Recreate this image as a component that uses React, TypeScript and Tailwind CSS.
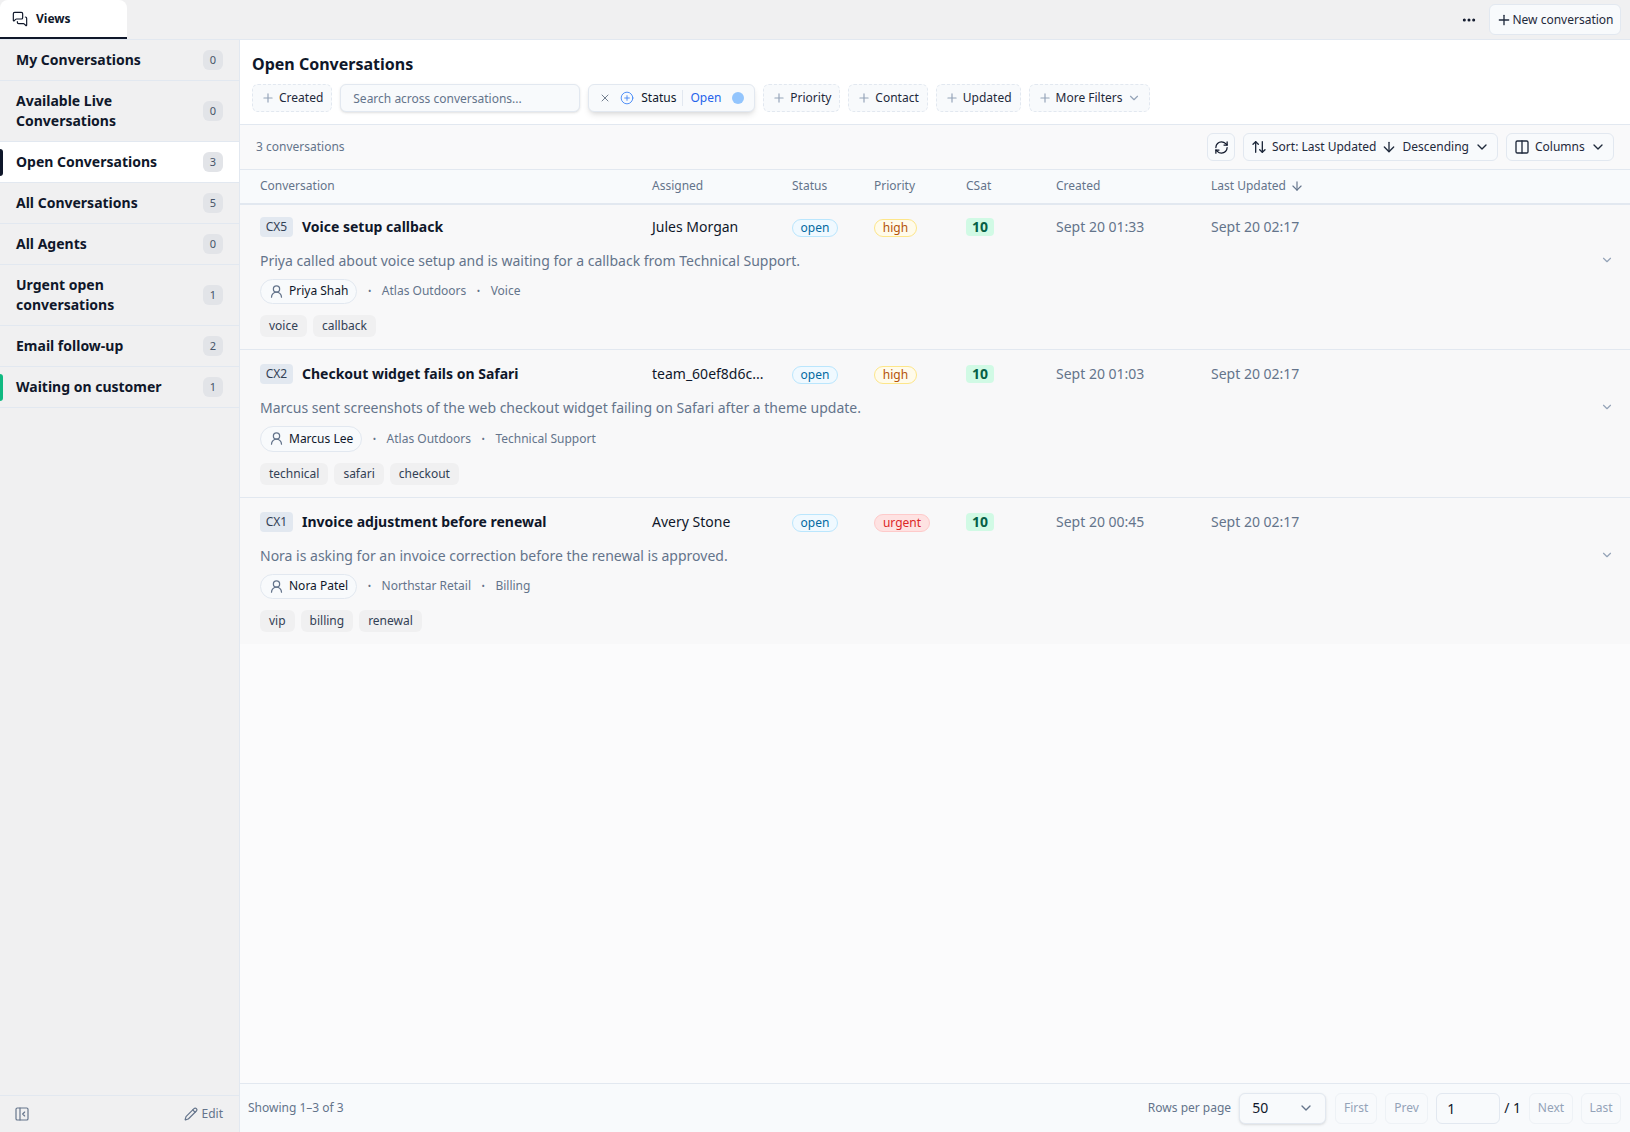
import React from 'react';
import {
  ArrowDown,
  ArrowUpDown,
  ChevronDown,
  CirclePlus,
  Columns2,
  Ellipsis,
  MessagesSquare,
  PanelLeftClose,
  Pencil,
  Plus,
  RefreshCw,
  UserRound,
  X,
} from 'lucide-react';

const views = [
  { label: ['My Conversations'], count: 0 },
  { label: ['Available Live', 'Conversations'], count: 0 },
  { label: ['Open Conversations'], count: 3, active: true, marker: 'bg-[#0f172a]' },
  { label: ['All Conversations'], count: 5 },
  { label: ['All Agents'], count: 0 },
  { label: ['Urgent open', 'conversations'], count: 1 },
  { label: ['Email follow-up'], count: 2 },
  { label: ['Waiting on customer'], count: 1, marker: 'bg-[#10b981]' },
];

const rows = [
  {
    id: 'CX5',
    title: 'Voice setup callback',
    assigned: 'Jules Morgan',
    priority: 'high',
    created: 'Sept 20 01:33',
    summary: 'Priya called about voice setup and is waiting for a callback from Technical Support.',
    contact: 'Priya Shah',
    account: 'Atlas Outdoors',
    team: 'Voice',
    tags: ['voice', 'callback'],
  },
  {
    id: 'CX2',
    title: 'Checkout widget fails on Safari',
    assigned: 'team_60ef8d6c...',
    priority: 'high',
    created: 'Sept 20 01:03',
    summary: 'Marcus sent screenshots of the web checkout widget failing on Safari after a theme update.',
    contact: 'Marcus Lee',
    account: 'Atlas Outdoors',
    team: 'Technical Support',
    tags: ['technical', 'safari', 'checkout'],
  },
  {
    id: 'CX1',
    title: 'Invoice adjustment before renewal',
    assigned: 'Avery Stone',
    priority: 'urgent',
    created: 'Sept 20 00:45',
    summary: 'Nora is asking for an invoice correction before the renewal is approved.',
    contact: 'Nora Patel',
    account: 'Northstar Retail',
    team: 'Billing',
    tags: ['vip', 'billing', 'renewal'],
  },
];

const gridCols = 'grid grid-cols-[392px_140px_82px_92px_90px_155px_1fr] pl-5';

const FilterButton: React.FC<{ label: string; chevron?: boolean }> = ({ label, chevron }) => (
  <button className="flex h-7 items-center gap-1 rounded-md border border-dashed border-[#e2e8f0] bg-[#f8fafc] px-2 text-xs text-[#1e293b]">
    <Plus size={14} className="text-[#94a3b8]" />
    {label}
    {chevron && <ChevronDown size={14} className="text-[#94a3b8]" />}
  </button>
);

const PageButton: React.FC<{ label: string; className: string }> = ({ label, className }) => (
  <button className={`flex h-[31px] items-center justify-center rounded-md border border-[#eef2f6] bg-[#f8fafc] text-xs text-[#94a3b8] ${className}`}>
    {label}
  </button>
);

const Dot = () => <span className="mx-[10.5px] text-[9px] text-[#64748b]">•</span>;

const App: React.FC = () => {
  return (
    <div className="flex h-screen w-screen flex-col overflow-hidden bg-[#f0f0f1] font-['Noto_Sans',sans-serif] text-[#0f172a]">
      {/* Top tab bar */}
      <header className="flex h-10 shrink-0 items-start justify-between border-b border-[#e2e8f0] pr-[9px]">
        <div className="flex h-[39px] w-[127px] items-center gap-2 rounded-t-lg border-b-2 border-[#0f172a] bg-white pl-3">
          <MessagesSquare size={16} strokeWidth={1.75} />
          <span className="text-xs font-bold">Views</span>
        </div>
        <div className="flex items-center gap-3 pt-1">
          <Ellipsis size={16} strokeWidth={2.5} />
          <button className="flex h-[31px] w-[132px] items-center justify-center rounded-md border border-[#e2e8f0] bg-[#f8fafc] text-xs text-[#1e293b]">
            <Plus size={16} />
            New conversation
          </button>
        </div>
      </header>

      <div className="flex min-h-0 flex-1">
        {/* Views sidebar */}
        <aside className="flex w-60 shrink-0 flex-col border-r border-[#e2e8f0]">
          <nav className="flex-1">
            {views.map((view) => (
              <div
                key={view.label[0]}
                className={`relative flex items-center justify-between border-b border-[#e2e8f0] py-2.5 pl-4 pr-4 ${view.active ? 'bg-white' : ''}`}
              >
                {view.marker && <span className={`absolute left-0 top-[7px] h-[27px] w-[3px] rounded-r ${view.marker}`} />}
                <div className="text-sm font-bold">
                  {view.label.map((line) => (
                    <div key={line}>{line}</div>
                  ))}
                </div>
                <span className="flex h-5 w-5 items-center justify-center rounded-md bg-[#e2e4e8] text-[11px] text-[#475569]">
                  {view.count}
                </span>
              </div>
            ))}
          </nav>
          <div className="flex h-[37px] items-center justify-between border-t border-[#e2e8f0] pl-[14px] pr-4 text-[#64748b]">
            <PanelLeftClose size={16} strokeWidth={1.75} />
            <button className="flex items-center gap-1 text-xs">
              <Pencil size={14} />
              Edit
            </button>
          </div>
        </aside>

        {/* Main */}
        <main className="flex min-w-0 flex-1 flex-col bg-[#fbfbfc]">
          <section className="border-b border-[#e2e8f0] bg-white px-3 py-3">
            <h1 className="text-base font-bold">Open Conversations</h1>
            <div className="mt-2 flex items-center gap-2">
              <FilterButton label="Created" />
              <input
                className="h-7 w-60 rounded-md border border-[#e2e8f0] bg-[#f8fafc] px-3 text-xs shadow-sm outline-none placeholder:text-[#64748b]"
                placeholder="Search across conversations..."
              />
              <div className="flex h-7 w-[167px] items-center rounded-md border border-[#e2e8f0] bg-[#f8fafc] pl-[10px] text-xs shadow-md">
                <X size={12} strokeWidth={1.5} className="text-[#475569]" />
                <CirclePlus size={14} strokeWidth={1.5} className="ml-[9px] text-[#3b82f6]" />
                <span className="ml-[7px]">Status</span>
                <span className="ml-[6px] h-4 w-px bg-[#e2e8f0]" />
                <span className="ml-[7px] text-[#2563eb]">Open</span>
                <span className="ml-[11px] h-3 w-3 rounded-full bg-[#93c5fd]" />
              </div>
              <FilterButton label="Priority" />
              <FilterButton label="Contact" />
              <FilterButton label="Updated" />
              <FilterButton label="More Filters" chevron />
            </div>
          </section>

          {/* Toolbar */}
          <section className="flex h-[45px] shrink-0 items-center justify-between border-b border-[#e2e8f0] bg-[#f9f9fa] px-4">
            <span className="text-xs text-[#64748b]">3 conversations</span>
            <div className="flex items-center gap-2">
              <button className="flex h-7 w-7 items-center justify-center rounded-md border border-[#e2e8f0] bg-[#f8fafc]">
                <RefreshCw size={15} />
              </button>
              <button className="flex h-7 w-[255px] items-center justify-between rounded-md border border-[#e2e8f0] bg-[#f8fafc] px-[7px] text-xs text-[#1e293b]">
                <span className="flex items-center gap-[5px]">
                  <ArrowUpDown size={16} />
                  Sort: Last Updated
                </span>
                <ArrowDown size={16} />
                <span>Descending</span>
                <ChevronDown size={16} />
              </button>
              <button className="flex h-7 w-[108px] items-center justify-between rounded-md border border-[#e2e8f0] bg-[#f8fafc] px-[7px] text-xs text-[#1e293b]">
                <span className="flex items-center gap-[5px]">
                  <Columns2 size={16} />
                  Columns
                </span>
                <ChevronDown size={16} />
              </button>
            </div>
          </section>

          {/* Table head */}
          <div className={`relative z-10 h-[32.5px] shrink-0 items-center bg-[#f8fafc] text-xs text-[#64748b] shadow-[0_2px_0_#e2e8f0] ${gridCols}`}>
            <span>Conversation</span>
            <span>Assigned</span>
            <span>Status</span>
            <span>Priority</span>
            <span>CSat</span>
            <span>Created</span>
            <span className="flex items-center gap-1">
              Last Updated
              <ArrowDown size={14} />
            </span>
          </div>

          {/* Rows */}
          <div className="min-h-0 flex-1">
            {rows.map((row, i) => (
              <article
                key={row.id}
                className={`bg-[#f8f8f9] pt-3 ${i < rows.length - 1 ? 'border-b border-[#e2e8f0] pb-3' : 'pb-3'}`}
              >
                <div className={`h-6 items-center ${gridCols}`}>
                  <div className="flex items-center gap-[9px]">
                    <span className="flex h-5 w-[33px] items-center justify-center rounded bg-[#e2e8f0] text-xs text-[#334155]">{row.id}</span>
                    <span className="text-sm font-bold">{row.title}</span>
                  </div>
                  <span className="text-sm">{row.assigned}</span>
                  <div className="mt-0.5 flex">
                    <span className="flex h-[18px] w-[46px] items-center justify-center rounded-full border border-[#bae6fd] bg-[#f0f9ff] text-xs text-[#0369a1]">
                      open
                    </span>
                  </div>
                  <div className="mt-0.5 flex">
                    {row.priority === 'high' ? (
                      <span className="flex h-[18px] w-[43px] items-center justify-center rounded-full border border-[#fde68a] bg-[#fffbeb] text-xs text-[#b45309]">
                        high
                      </span>
                    ) : (
                      <span className="flex h-[18px] w-[56px] items-center justify-center rounded-full border border-[#fecaca] bg-[#fee2e2] text-xs text-[#dc2626]">
                        urgent
                      </span>
                    )}
                  </div>
                  <div className="flex">
                    <span className="flex h-[18px] w-7 items-center justify-center rounded bg-[#d1fae5] text-sm font-bold text-[#065f46]">10</span>
                  </div>
                  <span className="text-sm text-[#64748b]">{row.created}</span>
                  <span className="text-sm text-[#64748b]">Sept 20 02:17</span>
                </div>

                <div className="mt-3 flex items-center justify-between pl-5 pr-4">
                  <p className="text-sm text-[#64748b]">{row.summary}</p>
                  <ChevronDown size={14} className="mb-0.5 text-[#94a3b8]" />
                </div>

                <div className="mt-2 flex h-[25.5px] items-center pl-5 text-xs text-[#64748b]">
                  <span className="flex h-[25.5px] items-center gap-[5px] rounded-full border border-[#e2e8f0] bg-[#f8fafc] pl-2 pr-2 text-[#0f172a]">
                    <UserRound size={15} className="text-[#64748b]" />
                    {row.contact}
                  </span>
                  <Dot />
                  <span>{row.account}</span>
                  <Dot />
                  <span>{row.team}</span>
                </div>

                <div className="mt-[11px] flex gap-1.5 pl-5">
                  {row.tags.map((tag) => (
                    <span key={tag} className="flex h-[22px] items-center rounded-md bg-[#f0f0f1] px-[9px] text-xs text-[#334155]">
                      {tag}
                    </span>
                  ))}
                </div>
              </article>
            ))}
          </div>

          {/* Footer pagination */}
          <footer className="flex h-[49px] shrink-0 items-center justify-between border-t border-[#e2e8f0] bg-[#f8fafc] pl-2 pr-[9px]">
            <span className="text-xs text-[#64748b]">Showing 1–3 of 3</span>
            <div className="flex items-center gap-2">
              <span className="text-xs text-[#64748b]">Rows per page</span>
              <button className="mr-px flex h-[31px] w-[87px] items-center justify-between rounded-md border border-[#e2e8f0] bg-[#f8fafc] pl-3 pr-[11px] text-sm shadow-sm">
                50
                <ChevronDown size={16} className="text-[#64748b]" />
              </button>
              <PageButton label="First" className="w-[42px]" />
              <PageButton label="Prev" className="w-[43px]" />
              <input
                defaultValue="1"
                className="h-[31px] w-16 rounded-md border border-[#e2e8f0] bg-[#f8fafc] px-2.5 text-sm outline-none"
              />
              <span className="-ml-1 text-sm">/ 1</span>
              <PageButton label="Next" className="w-[44px]" />
              <PageButton label="Last" className="w-[40px]" />
            </div>
          </footer>
        </main>
      </div>
    </div>
  );
};

export default App;
